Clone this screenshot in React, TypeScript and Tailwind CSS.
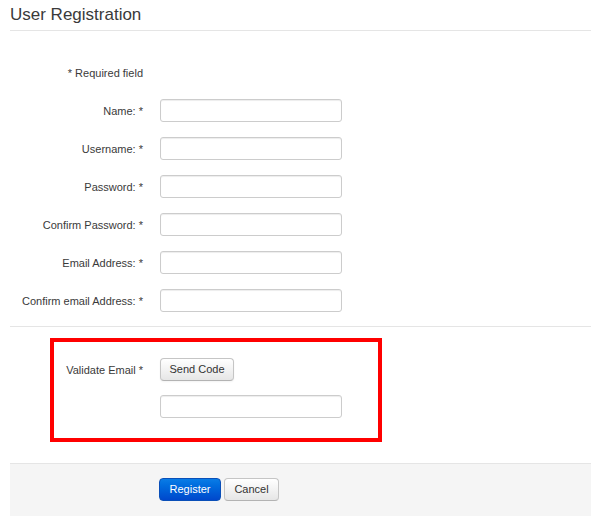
const fields = [
  'Name: *',
  'Username: *',
  'Password: *',
  'Confirm Password: *',
  'Email Address: *',
  'Confirm email Address: *',
]

function TextInput() {
  return (
    <input
      type="text"
      className="h-[23px] w-[182px] rounded-[3px] border border-[#cccccc] bg-white px-[6px] text-[11px] shadow-[inset_0_1px_1px_rgba(0,0,0,0.075)] outline-none"
    />
  )
}

export default function App() {
  return (
    <div className="h-[522px] w-[600px] bg-white font-['Liberation_Sans',Arial,sans-serif] text-[11px] text-[#3a3a3a]">
      <div className="w-[591px] pl-[10px]">
        <h1 className="h-[31px] border-b border-[#e5e5e5] pt-[5px] text-[17px] leading-[20px] font-normal text-[#3a3a3a]">
          User Registration
        </h1>

        {/* form fields */}
        <div className="mt-[33px] flex items-center">
          <div className="w-[133px] pt-[1px] text-right leading-[16px]">* Required field</div>
        </div>

        <div className="mt-[18px] flex flex-col gap-[15px]">
          {fields.map((label) => (
            <div key={label} className="flex items-center gap-[17px]">
              <label className="w-[133px] pt-[2px] text-right">{label}</label>
              <TextInput />
            </div>
          ))}
        </div>

        <div className="mt-[14px] border-t border-[#e5e5e5]" />

        {/* highlighted email validation */}
        <div className="ml-[40px] mt-[11px] h-[104px] w-[332px] border-4 border-[#ff0000] pt-[16px]">
          <div className="flex items-center gap-[17px]">
            <label className="w-[89px] pt-[2px] text-right">Validate Email *</label>
            <button className="h-[23px] w-[74px] rounded-[4px] border border-[#c5c5c5] border-b-[#b3b3b3] bg-gradient-to-b from-white to-[#e6e6e6] text-[11px] text-[#333333] shadow-[inset_0_1px_0_rgba(255,255,255,0.2),0_1px_2px_rgba(0,0,0,0.05)]">
              Send Code
            </button>
          </div>
          <div className="mt-[14px] flex items-center gap-[17px]">
            <div className="w-[89px]" />
            <TextInput />
          </div>
        </div>

        {/* actions */}
        <div className="mt-[21px] flex h-[53px] items-start gap-[3px] border-t border-[#e5e5e5] bg-[#f5f5f5] pl-[149px] pt-[14px]">
          <button className="h-[23px] w-[62px] rounded-[4px] border border-[#0a4fb8] bg-gradient-to-b from-[#0a7ce6] to-[#0047cc] text-[11px] text-white">
            Register
          </button>
          <button className="h-[23px] w-[55px] rounded-[4px] border border-[#c5c5c5] border-b-[#b3b3b3] bg-gradient-to-b from-white to-[#e6e6e6] text-[11px] text-[#333333]">
            Cancel
          </button>
        </div>
      </div>
    </div>
  )
}
